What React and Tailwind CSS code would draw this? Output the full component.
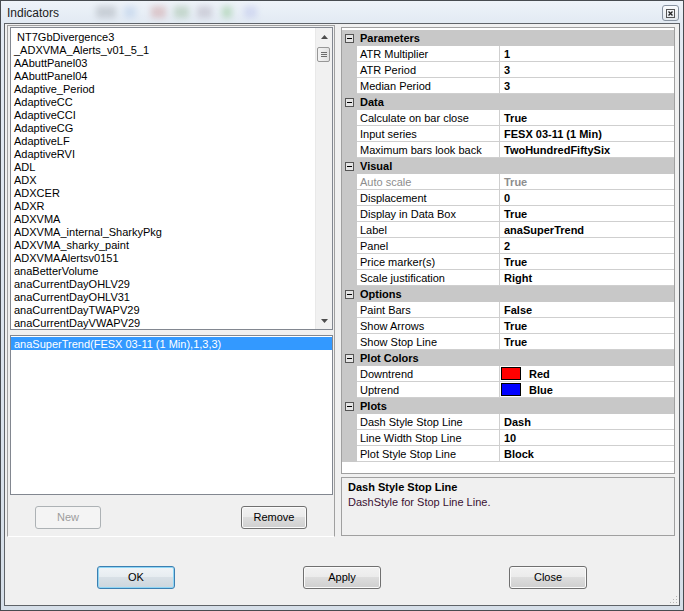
import React from "react";

const indicators = [
  " NT7GbDivergence3",
  "_ADXVMA_Alerts_v01_5_1",
  "AAbuttPanel03",
  "AAbuttPanel04",
  "Adaptive_Period",
  "AdaptiveCC",
  "AdaptiveCCI",
  "AdaptiveCG",
  "AdaptiveLF",
  "AdaptiveRVI",
  "ADL",
  "ADX",
  "ADXCER",
  "ADXR",
  "ADXVMA",
  "ADXVMA_internal_SharkyPkg",
  "ADXVMA_sharky_paint",
  "ADXVMAAlertsv0151",
  "anaBetterVolume",
  "anaCurrentDayOHLV29",
  "anaCurrentDayOHLV31",
  "anaCurrentDayTWAPV29",
  "anaCurrentDayVWAPV29",
];

const groups = [
  { name: "Parameters", rows: [["ATR Multiplier", "1"], ["ATR Period", "3"], ["Median Period", "3"]] },
  {
    name: "Data",
    rows: [
      ["Calculate on bar close", "True"],
      ["Input series", "FESX 03-11 (1 Min)"],
      ["Maximum bars look back", "TwoHundredFiftySix"],
    ],
  },
  {
    name: "Visual",
    rows: [
      ["Auto scale", "True", { disabled: true }],
      ["Displacement", "0"],
      ["Display in Data Box", "True"],
      ["Label", "anaSuperTrend"],
      ["Panel", "2"],
      ["Price marker(s)", "True"],
      ["Scale justification", "Right"],
    ],
  },
  { name: "Options", rows: [["Paint Bars", "False"], ["Show Arrows", "True"], ["Show Stop Line", "True"]] },
  {
    name: "Plot Colors",
    rows: [
      ["Downtrend", "Red", { swatch: "red" }],
      ["Uptrend", "Blue", { swatch: "blue" }],
    ],
  },
  {
    name: "Plots",
    rows: [
      ["Dash Style Stop Line", "Dash"],
      ["Line Width Stop Line", "10"],
      ["Plot Style Stop Line", "Block"],
    ],
  },
];

function WinButton({ children, disabled, focused, className = "" }) {
  let cls =
    "h-[23px] flex items-center justify-center rounded-[3px] border text-[11px] leading-none ";
  if (disabled) {
    cls += "border-[#adb2b5] bg-[#f4f4f4] text-[#9d9d9d]";
  } else if (focused) {
    cls +=
      "border-[#3c7fb1] text-black shadow-[inset_0_0_0_1px_#8fd6f5] bg-[linear-gradient(to_bottom,#f0f4f7_0%,#e6ecf0_50%,#d8e0e6_50%,#cdd6dd_100%)]";
  } else {
    cls +=
      "border-[#707070] text-black shadow-[inset_0_0_0_1px_#fbfbfb] bg-[linear-gradient(to_bottom,#f2f2f2_0%,#ebebeb_50%,#dddddd_50%,#cfcfcf_100%)]";
  }
  return <div className={cls + " " + className}>{children}</div>;
}

function Triangle({ down }) {
  return (
    <svg width="7" height="4" viewBox="0 0 7 4">
      {down ? (
        <polygon points="0,0 7,0 3.5,4" fill="#4d4d4d" />
      ) : (
        <polygon points="3.5,0 7,4 0,4" fill="#4d4d4d" />
      )}
    </svg>
  );
}

function MinusBox() {
  return (
    <svg width="9" height="9" viewBox="0 0 9 9" className="shrink-0">
      <rect x="0.5" y="0.5" width="8" height="8" fill="#e4e4e4" stroke="#555" />
      <line x1="2" y1="4.5" x2="7" y2="4.5" stroke="#000" strokeWidth="1" />
    </svg>
  );
}

export default function App() {
  return (
    <div className="w-[684px] h-[611px] bg-[#474b50] p-[1px] font-['Liberation_Sans',Arial,sans-serif] text-[11px] text-black select-none">
      <div className="w-full h-full flex flex-col bg-[linear-gradient(to_bottom,#e3eaf3,#d5dee8)] pb-[4px]">
        {/* Title bar */}
        <div className="h-[22px] flex items-center shrink-0 bg-[linear-gradient(to_bottom,#eef3f9,#e2eaf3)]">
          <span className="pl-[6px] pt-[2px] text-[12px] text-[#1b1b1b] leading-none">Indicators</span>
          <div className="flex items-center ml-[37px] h-[14px] opacity-40">
            <div className="w-[20px] h-[12px] bg-[#9aa0a8] blur-[3px]" />
            <div className="ml-[8px] w-[12px] h-[12px] bg-[#a9c3e6] blur-[3px]" />
            <div className="ml-[15px] w-[15px] h-[12px] bg-[#c98c8c] blur-[3px]" />
            <div className="ml-[8px] w-[15px] h-[12px] bg-[#8fb38f] blur-[3px]" />
            <div className="ml-[8px] w-[15px] h-[12px] bg-[#a9a2b2] blur-[3px]" />
            <div className="ml-[10px] w-[10px] h-[12px] bg-[#7fbf7f] blur-[3px]" />
            <div className="ml-[12px] w-[13px] h-[12px] bg-[#b2b9e9] blur-[3px]" />
          </div>
          <div className="ml-auto mr-[4px] mt-[2px] w-[17px] h-[16px] rounded-[3px] border border-[#8893a1] bg-[linear-gradient(to_bottom,#fbfcfd,#e3e8ee)] flex items-center justify-center">
            <svg width="9" height="9" viewBox="0 0 9 9">
              <rect x="0.5" y="0.5" width="8" height="8" fill="none" stroke="#555" />
              <path d="M2.5 2.5 L6.5 6.5 M6.5 2.5 L2.5 6.5" stroke="#222" strokeWidth="1.3" />
            </svg>
          </div>
        </div>

        {/* Client area */}
        <div className="flex-1 mx-[3px] border border-[#5f6368] bg-[#f0f0f0] flex flex-col">
          <div className="mt-[1px] ml-[2px] h-[512px] flex shrink-0">
            {/* Left panel */}
            <div className="w-[328px] h-full border-l border-t border-r border-[#a0a0a0] border-b border-b-white flex flex-col pl-[2px] pt-[1px] pr-[1px]">
              {/* Indicator list */}
              <div className="h-[303px] border border-[#828790] bg-white flex">
                <div className="flex-1 pt-[2px] overflow-hidden">
                  {indicators.map((n) => (
                    <div key={n} className="h-[13px] leading-[13px] pl-[3px] pt-[1px] whitespace-pre">
                      {n}
                    </div>
                  ))}
                </div>
                <div className="w-[17px] h-full bg-[#f1f1f1] border-l border-[#e9e9e9] flex flex-col">
                  <div className="h-[18px] flex items-center justify-center">
                    <Triangle />
                  </div>
                  <div className="mt-[1px] ml-[1px] w-[13px] h-[15px] rounded-[2px] border border-[#979797] bg-[linear-gradient(to_right,#f3f3f3,#e2e2e2)] flex flex-col items-center justify-center gap-[1px]">
                    <div className="w-[6px] h-[1px] bg-[#6d6d6d]" />
                    <div className="w-[6px] h-[1px] bg-[#6d6d6d]" />
                    <div className="w-[6px] h-[1px] bg-[#6d6d6d]" />
                  </div>
                  <div className="mt-auto h-[16px] flex items-center justify-center">
                    <Triangle down />
                  </div>
                </div>
              </div>

              {/* Selected list */}
              <div className="mt-[5px] h-[160px] border border-[#828790] bg-white pt-[1px]">
                <div className="h-[13px] leading-[13px] pl-[3px] pt-[1px] bg-[#3399ff] text-white whitespace-pre">
                  anaSuperTrend(FESX 03-11 (1 Min),1,3,3)
                </div>
              </div>

              {/* Buttons */}
              <div className="mt-[11px] flex">
                <WinButton disabled className="ml-[25px] w-[66px]">
                  New
                </WinButton>
                <WinButton className="ml-[140px] w-[66px]">Remove</WinButton>
              </div>
            </div>

            {/* Right panel */}
            <div className="ml-[6px] w-[334px] h-full flex flex-col">
              <div className="mt-[2px] h-[447px] border border-[#a0a0a0] bg-white pt-[2px] flex flex-col">
                {groups.map((g) => (
                  <React.Fragment key={g.name}>
                    <div className="h-[16px] bg-[#c8c8c8] flex items-center">
                      <div className="ml-[3px]">
                        <MinusBox />
                      </div>
                      <span className="ml-[6px] pt-[1px] font-bold leading-none">{g.name}</span>
                    </div>
                    {g.rows.map(([label, value, opt = {}]) => (
                      <div key={label} className="h-[16px] flex">
                        <div className="w-[15px] h-full bg-[#c8c8c8]" />
                        <div
                          className={
                            "w-[143px] h-full border-b border-r border-[#cfcfcf] pl-[3px] pt-[1px] flex items-center whitespace-nowrap " +
                            (opt.disabled ? "text-[#8d8d8d]" : "text-black")
                          }
                        >
                          {label}
                        </div>
                        <div
                          className={
                            "flex-1 h-full border-b border-[#cfcfcf] flex items-center font-bold whitespace-nowrap " +
                            (opt.disabled ? "text-[#8d8d8d]" : "text-black") +
                            (opt.swatch ? " pl-[1px]" : " pl-[4px] pt-[1px]")
                          }
                        >
                          {opt.swatch === "red" && (
                            <div className="w-[20px] h-[13px] border border-black bg-[#ff0000] mr-[8px]" />
                          )}
                          {opt.swatch === "blue" && (
                            <div className="w-[20px] h-[13px] border border-black bg-[#0000ff] mr-[8px]" />
                          )}
                          <span className={opt.swatch ? "pt-[1px]" : ""}>{value}</span>
                        </div>
                      </div>
                    ))}
                  </React.Fragment>
                ))}
              </div>

              {/* Description */}
              <div className="mt-[3px] h-[59px] border border-[#a0a0a0] bg-[#f0f0f0] pl-[6px] pt-[2px] leading-[15px]">
                <div className="font-bold text-black">Dash Style Stop Line</div>
                <div className="text-[#3a1032]">DashStyle for Stop Line Line.</div>
              </div>
            </div>
          </div>

          {/* Bottom buttons */}
          <div className="flex-1 flex">
            <div className="flex pt-[29px] pl-[92px]">
              <WinButton focused className="w-[78px]">
                OK
              </WinButton>
              <WinButton className="ml-[128px] w-[78px]">Apply</WinButton>
              <WinButton className="ml-[128px] w-[78px]">Close</WinButton>
            </div>
            <div className="ml-auto self-end mr-[1px] mb-[1px]">
              <svg width="9" height="9" viewBox="0 0 9 9">
                <rect x="7" y="1" width="1" height="1" fill="#b5b5b5" />
                <rect x="4" y="4" width="1" height="1" fill="#b5b5b5" />
                <rect x="7" y="4" width="1" height="1" fill="#b5b5b5" />
                <rect x="1" y="7" width="1" height="1" fill="#b5b5b5" />
                <rect x="4" y="7" width="1" height="1" fill="#b5b5b5" />
                <rect x="7" y="7" width="1" height="1" fill="#b5b5b5" />
              </svg>
            </div>
          </div>
        </div>
      </div>
    </div>
  );
}
